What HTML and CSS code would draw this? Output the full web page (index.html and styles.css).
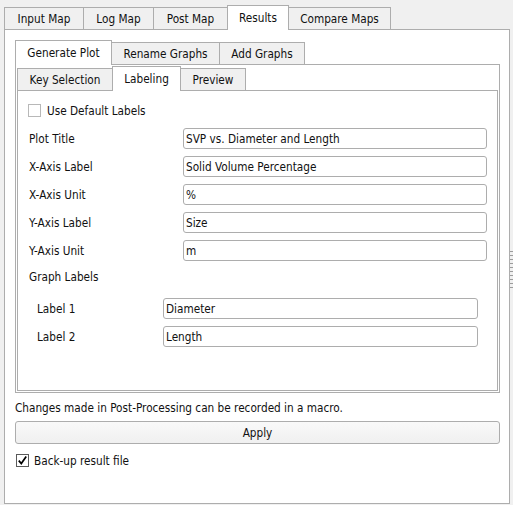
FILE: index.html
```html
<!DOCTYPE html>
<html>
<head>
<meta charset="utf-8">
<link rel="stylesheet" href="styles.css">
</head>
<body>
<div class="window">
  <div class="tabbar">
    <div class="tab w-input">Input Map</div>
    <div class="tab w-log">Log Map</div>
    <div class="tab w-post">Post Map</div>
    <div class="tab sel w-results">Results</div>
    <div class="tab w-compare">Compare Maps</div>
  </div>
  <div class="panel outer">
    <div class="tabbar">
      <div class="tab sel w-gen">Generate Plot</div>
      <div class="tab w-rename">Rename Graphs</div>
      <div class="tab w-add">Add Graphs</div>
    </div>
    <div class="panel mid">
      <div class="tabbar">
        <div class="tab w-key">Key Selection</div>
        <div class="tab sel w-label">Labeling</div>
        <div class="tab w-preview">Preview</div>
      </div>
      <div class="panel inner">
        <label class="check light"><span class="box"></span><span class="txt">Use Default Labels</span></label>
        <div class="form">
          <span class="lbl">Plot Title</span><input class="field" value="SVP vs. Diameter and Length">
          <span class="lbl">X-Axis Label</span><input class="field" value="Solid Volume Percentage">
          <span class="lbl">X-Axis Unit</span><input class="field" value="%">
          <span class="lbl">Y-Axis Label</span><input class="field" value="Size">
          <span class="lbl">Y-Axis Unit</span><input class="field" value="m">
        </div>
        <div class="group-title">Graph Labels</div>
        <div class="form sub">
          <span class="lbl">Label 1</span><input class="field" value="Diameter">
          <span class="lbl">Label 2</span><input class="field" value="Length">
        </div>
      </div>
    </div>
    <p class="note">Changes made in Post-Processing can be recorded in a macro.</p>
    <button class="btn">Apply</button>
    <label class="check backup"><span class="box"><svg width="11" height="11" viewBox="0 0 11 11"><path d="M1.8 5.6 L4.3 8.6 L9.2 1.6" fill="none" stroke="#000" stroke-width="1.7"/></svg></span><span class="txt">Back-up result file</span></label>
    <div class="grip"></div>
  </div>
</div>
</body>
</html>
```

FILE: styles.css
```css
html, body {
  margin: 0;
  background: #f0f0f0;
}
body {
  font-family: "DejaVu Sans Condensed", "DejaVu Sans", sans-serif;
  font-size: 11.7px;
  color: #111;
  width: 513px;
  height: 505px;
  overflow: hidden;
}
.window {
  padding: 5px 0 0 4px;
}
.tabbar {
  display: flex;
  align-items: flex-end;
  height: 24px;
}
.tab {
  box-sizing: border-box;
  height: 22px;
  border: 1px solid #adadad;
  border-bottom: none;
  background: #f0f0f0;
  margin-left: -1px;
  display: flex;
  align-items: center;
  justify-content: center;
  white-space: nowrap;
}
.tab:first-child {
  margin-left: 0;
}
.tab.sel {
  height: 25px;
  margin-bottom: -1px;
  background: #fff;
  position: relative;
  z-index: 1;
}
.w-input { width: 80px; }
.w-log { width: 71px; }
.w-post { width: 75px; }
.w-results { width: 62px; }
.w-compare { width: 103px; }
.w-gen { width: 97px; }
.w-rename { width: 109px; }
.w-add { width: 86px; }
.w-key { width: 96px; }
.w-label { width: 69px; }
.w-preview { width: 66px; }

.panel {
  box-sizing: border-box;
  border: 1px solid #adadad;
  background: #fff;
}
.outer {
  width: 506px;
  height: 475px;
  padding: 10px 9px 0 10px;
  position: relative;
}
.mid {
  height: 329px;
  padding: 1px;
}
.inner {
  height: 301px;
  padding: 13px 10px 0 10px;
}
.check {
  display: flex;
  align-items: center;
  gap: 6px;
  height: 13px;
  line-height: 13px;
}
.check .txt {
  margin-top: 2px;
}
.box {
  box-sizing: border-box;
  width: 13px;
  height: 13px;
  border: 1px solid #333;
  background: #fff;
  display: flex;
  align-items: center;
  justify-content: center;
}
.check.light .box {
  border-color: #b8b8b8;
}
.check.light {
  margin-bottom: 11px;
}
.form {
  display: grid;
  grid-template-columns: 155px 304px;
  grid-auto-rows: 21px;
  row-gap: 7px;
  align-items: center;
}
.form.sub {
  grid-template-columns: 127px 315px;
  padding-left: 8px;
  margin-top: 13px;
}
.lbl {
  padding-left: 1px;
}
.field {
  box-sizing: border-box;
  height: 21px;
  width: 100%;
  margin: 0;
  border: 1px solid #adadad;
  border-radius: 3px;
  padding: 0 2px;
  font: inherit;
  color: #111;
  background: #fff;
  outline: none;
}
.group-title {
  margin-top: 9px;
  height: 15px;
  line-height: 15px;
  padding-left: 1px;
}
.note {
  margin: 8px 0 5px 0;
  height: 15px;
  line-height: 15px;
}
.btn {
  display: block;
  box-sizing: border-box;
  width: 100%;
  height: 23px;
  margin: 0;
  border: 1px solid #adadad;
  border-radius: 3px;
  background: linear-gradient(#f9f9f9, #f0f0f0);
  font: inherit;
  color: #111;
  padding: 0;
}
.check.backup {
  margin-top: 10px;
  margin-left: 1px;
  gap: 5px;
}
.check.backup .box {
  border-color: #5a5a5a;
}
.grip {
  position: absolute;
  left: 505px;
  top: 221px;
  width: 3px;
  height: 40px;
  background: repeating-linear-gradient(to bottom, #9c9c9c 0, #9c9c9c 1px, #f0f0f0 1px, #f0f0f0 4px);
}
```
